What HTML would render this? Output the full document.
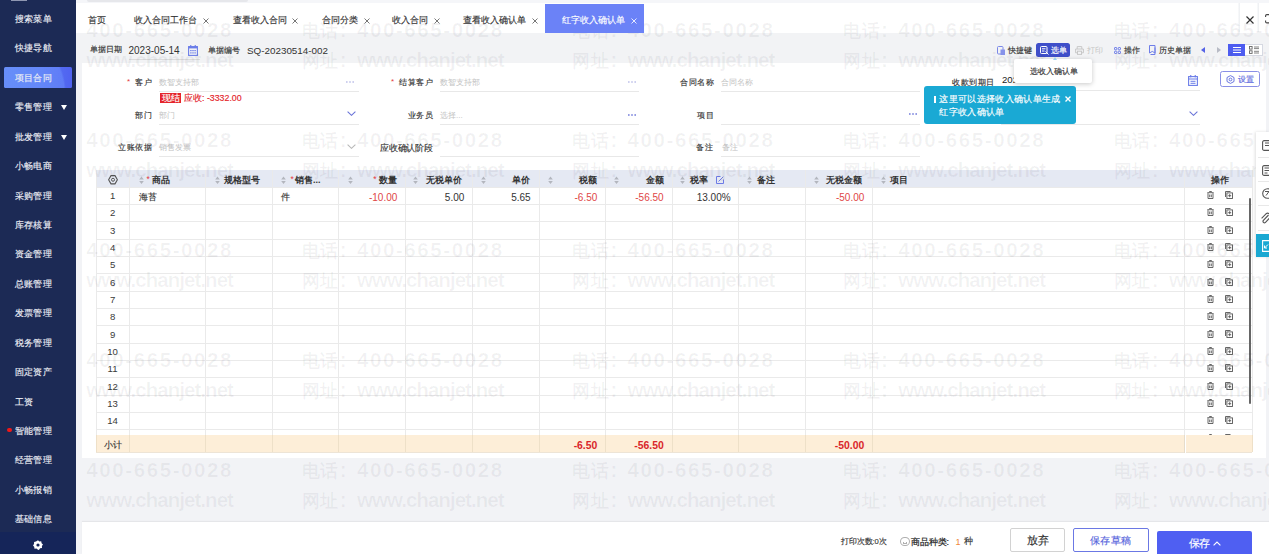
<!DOCTYPE html><html><head><meta charset="utf-8"><style>

*{margin:0;padding:0;box-sizing:border-box}
html,body{width:1269px;height:554px;overflow:hidden}
body{position:relative;background:#f2f3f6;font-family:"Liberation Sans", sans-serif;color:#333}
div,svg{position:absolute}
.t{white-space:nowrap}
.wm{color:rgba(40,40,60,0.06);font-weight:bold;font-size:20.5px;line-height:24px;white-space:nowrap;z-index:3;pointer-events:none}
.wm b{font-weight:bold;letter-spacing:1.6px}
.wm s{text-decoration:none;display:inline-block;width:36.5px;font-size:18px;text-align:justify;text-align-last:justify}
.wm i{font-style:normal;margin:0 10.4px 0 1.5px}
.wm u{text-decoration:none;letter-spacing:-0.95px}

</style></head><body>
<div style="left:76.00px;top:0.00px;width:1193.00px;height:33.00px;background:#fff;"></div>
<div style="left:76.00px;top:0.00px;width:1193.00px;height:3.00px;background:#f5f6f9;"></div>
<div style="left:87.00px;top:0.00px;width:161.00px;height:2.00px;background:#e6e7eb;border-radius:0 0 2px 2px"></div>
<div class="t" style="top:13.70px;font-size:9px;line-height:12.6px;color:#333;left:88.00px;-webkit-text-stroke:0.15px #333;width:17.60px;text-align:justify;text-align-last:justify;">首页</div>
<div class="t" style="top:13.70px;font-size:9px;line-height:12.6px;color:#333;left:134.00px;-webkit-text-stroke:0.15px #333;width:62.60px;text-align:justify;text-align-last:justify;">收入合同工作台</div>
<svg style="left:202.90px;top:17.80px;" width="6" height="6" viewBox="0 0 6 6"><path d="M0.5 0.5L5.5 5.5M5.5 0.5L0.5 5.5" stroke="#777" stroke-width="1.0"/></svg>
<div class="t" style="top:13.70px;font-size:9px;line-height:12.6px;color:#333;left:232.80px;-webkit-text-stroke:0.15px #333;width:53.60px;text-align:justify;text-align-last:justify;">查看收入合同</div>
<svg style="left:292.10px;top:17.80px;" width="6" height="6" viewBox="0 0 6 6"><path d="M0.5 0.5L5.5 5.5M5.5 0.5L0.5 5.5" stroke="#777" stroke-width="1.0"/></svg>
<div class="t" style="top:13.70px;font-size:9px;line-height:12.6px;color:#333;left:322.00px;-webkit-text-stroke:0.15px #333;width:35.60px;text-align:justify;text-align-last:justify;">合同分类</div>
<svg style="left:363.60px;top:17.80px;" width="6" height="6" viewBox="0 0 6 6"><path d="M0.5 0.5L5.5 5.5M5.5 0.5L0.5 5.5" stroke="#777" stroke-width="1.0"/></svg>
<div class="t" style="top:13.70px;font-size:9px;line-height:12.6px;color:#333;left:392.00px;-webkit-text-stroke:0.15px #333;width:35.60px;text-align:justify;text-align-last:justify;">收入合同</div>
<svg style="left:434.00px;top:17.80px;" width="6" height="6" viewBox="0 0 6 6"><path d="M0.5 0.5L5.5 5.5M5.5 0.5L0.5 5.5" stroke="#777" stroke-width="1.0"/></svg>
<div class="t" style="top:13.70px;font-size:9px;line-height:12.6px;color:#333;left:463.00px;-webkit-text-stroke:0.15px #333;width:62.60px;text-align:justify;text-align-last:justify;">查看收入确认单</div>
<svg style="left:532.00px;top:17.80px;" width="6" height="6" viewBox="0 0 6 6"><path d="M0.5 0.5L5.5 5.5M5.5 0.5L0.5 5.5" stroke="#777" stroke-width="1.0"/></svg>
<div style="left:545.00px;top:4.00px;width:98.70px;height:29.00px;background:#6b82f7;z-index:4"></div>
<div class="t" style="top:13.70px;font-size:9px;line-height:12.6px;color:#fff;left:562.00px;-webkit-text-stroke:0.15px #fff;z-index:4;width:62.60px;text-align:justify;text-align-last:justify;">红字收入确认单</div>
<svg style="left:631.00px;top:17.80px;z-index:4;" width="6" height="6" viewBox="0 0 6 6"><path d="M0.5 0.5L5.5 5.5M5.5 0.5L0.5 5.5" stroke="#e6e9ff" stroke-width="1.0"/></svg>
<div style="left:1237.50px;top:3.00px;width:2.50px;height:29.00px;background:linear-gradient(90deg,#fafbfc,#eceef1);"></div>
<div style="left:1257.00px;top:3.00px;width:2.00px;height:29.00px;background:linear-gradient(90deg,#fafbfc,#eceef1);"></div>
<svg style="left:1245.50px;top:15.50px;" width="8" height="8" viewBox="0 0 8 8"><path d="M0.5 0.5L7.5 7.5M7.5 0.5L0.5 7.5" stroke="#333" stroke-width="1.2"/></svg>
<svg style="left:1265px;top:14px" width="5" height="9.5" viewBox="0 0 5 9.5"><path d="M4.5 0.6H1.8A1.2 1.2 0 0 0 0.6 1.8V3M0.6 6.5V7.7A1.2 1.2 0 0 0 1.8 8.9H4.5" fill="none" stroke="#444" stroke-width="1.1"/></svg>
<div style="left:76.00px;top:33.00px;width:1193.00px;height:30.00px;background:#f2f3f5;"></div>
<div class="t" style="top:44.40px;font-size:8px;line-height:11.2px;color:#333;left:89.50px;-webkit-text-stroke:0.15px #333;width:31.60px;text-align:justify;text-align-last:justify;">单据日期</div>
<div class="t" style="top:44.20px;font-size:10px;line-height:14.0px;color:#333;left:128.50px;">2023-05-14</div>
<svg style="left:188px;top:44.5px" width="10" height="11" viewBox="0 0 10 11"><rect x="0.6" y="1.6" width="8.8" height="8.8" fill="none" stroke="#6b7de8" stroke-width="1.1"/><rect x="0.6" y="1.6" width="8.8" height="1.8" fill="#6b7de8"/><g fill="#6b7de8"><rect x="2.2" y="5" width="1.4" height="1.2"/><rect x="4.3" y="5" width="1.4" height="1.2"/><rect x="6.4" y="5" width="1.4" height="1.2"/><rect x="2.2" y="7.3" width="1.4" height="1.2"/><rect x="4.3" y="7.3" width="1.4" height="1.2"/><rect x="6.4" y="7.3" width="1.4" height="1.2"/></g><rect x="2.2" y="0" width="1.1" height="2.4" fill="#6b7de8"/><rect x="6.7" y="0" width="1.1" height="2.4" fill="#6b7de8"/></svg>
<div style="left:129.00px;top:59.00px;width:71.00px;height:1.00px;background:#dcdcdc;"></div>
<div class="t" style="top:44.90px;font-size:8px;line-height:11.2px;color:#333;left:208.00px;-webkit-text-stroke:0.15px #333;width:31.60px;text-align:justify;text-align-last:justify;">单据编号</div>
<div class="t" style="top:43.50px;font-size:9.85px;line-height:13.79px;color:#333;left:247.00px;">SQ-20230514-002</div>
<svg style="left:996.5px;top:45.5px" width="8" height="9" viewBox="0 0 8 9"><rect x="0.5" y="0.5" width="5.5" height="7.5" rx="1" fill="none" stroke="#7b88e8" stroke-width="1"/><rect x="3.5" y="3.5" width="4.5" height="5.5" fill="#8793ea"/></svg>
<div class="t" style="top:45.20px;font-size:8px;line-height:11.2px;color:#333;left:1007.60px;-webkit-text-stroke:0.15px #333;width:23.60px;text-align:justify;text-align-last:justify;">快捷键</div>
<div style="left:1036.00px;top:43.40px;width:34.40px;height:13.20px;background:#3f4fc9;border-radius:2.5px"></div>
<svg style="left:1039.5px;top:45.5px" width="9" height="9" viewBox="0 0 9 9"><rect x="0.5" y="0.5" width="6.5" height="7" rx="1" fill="none" stroke="#fff" stroke-width="1"/><path d="M2 2.8h3.5M2 5h2.5" stroke="#fff" stroke-width="1"/><path d="M5.5 5.5l3 3" stroke="#fff" stroke-width="1"/></svg>
<div class="t" style="top:45.20px;font-size:8px;line-height:11.2px;color:#fff;left:1050.50px;-webkit-text-stroke:0.15px #fff;width:15.60px;text-align:justify;text-align-last:justify;">选单</div>
<div style="left:1053px;top:56.6px;width:0;height:0;border-left:2.5px solid transparent;border-right:2.5px solid transparent;border-bottom:3px solid #9fd2ee;z-index:11"></div>
<svg style="left:1074.6px;top:45.5px" width="9" height="9" viewBox="0 0 9 9"><path d="M2.2 3V0.6h4.6V3M0.6 3h7.8v3.8H7M2 6.8H0.6V3" fill="none" stroke="#c8c8c8" stroke-width="1"/><rect x="2.5" y="5.2" width="4" height="3.2" fill="none" stroke="#c8c8c8" stroke-width="1"/></svg>
<div class="t" style="top:45.20px;font-size:8px;line-height:11.2px;color:#c4c4c4;left:1086.70px;width:15.60px;text-align:justify;text-align-last:justify;">打印</div>
<svg style="left:1114px;top:46.5px" width="7" height="7" viewBox="0 0 7 7"><g fill="none" stroke="#6f7ee8" stroke-width="1"><rect x="0.5" y="0.5" width="2.3" height="2.3" rx=".6"/><rect x="4.2" y="0.5" width="2.3" height="2.3" rx=".6"/><rect x="0.5" y="4.2" width="2.3" height="2.3" rx=".6"/><rect x="4.2" y="4.2" width="2.3" height="2.3" rx=".6"/></g></svg>
<div class="t" style="top:45.20px;font-size:8px;line-height:11.2px;color:#333;left:1124.00px;-webkit-text-stroke:0.15px #333;width:15.60px;text-align:justify;text-align-last:justify;">操作</div>
<svg style="left:1148.7px;top:45px" width="7" height="10" viewBox="0 0 7 10"><path d="M0.5 0.5h5.5v7.5l-2.75-1.6-2.75 1.6z" fill="none" stroke="#6f7ee8" stroke-width="1"/><path d="M6 2.5v7H1.5" fill="none" stroke="#6f7ee8" stroke-width="1"/></svg>
<div class="t" style="top:45.20px;font-size:8px;line-height:11.2px;color:#333;left:1158.90px;-webkit-text-stroke:0.15px #333;width:31.60px;text-align:justify;text-align-last:justify;">历史单据</div>
<div style="left:1201px;top:46.8px;width:0;height:0;border-top:3.5px solid transparent;border-bottom:3.5px solid transparent;border-right:4.5px solid #5563e6"></div>
<div style="left:1217px;top:46.8px;width:0;height:0;border-top:3.5px solid transparent;border-bottom:3.5px solid transparent;border-left:4.5px solid #b8bbc5"></div>
<div style="left:1227.50px;top:43.80px;width:35.00px;height:12.50px;background:#fff;border:1px solid #d6d9e2"></div>
<div style="left:1227.50px;top:43.80px;width:17.50px;height:12.50px;background:#4d5cf0;"></div>
<svg style="left:1231.5px;top:46.3px" width="10" height="8" viewBox="0 0 10 8"><path d="M1 1.5h8M1 4h8M1 6.5h8" stroke="#fff" stroke-width="1"/></svg>
<svg style="left:1248.5px;top:46px" width="11" height="8" viewBox="0 0 11 8"><g fill="none" stroke="#666" stroke-width=".9"><rect x="0.5" y="0.5" width="2.6" height="2.6"/><rect x="0.5" y="4.8" width="2.6" height="2.6"/></g><path d="M5 1h5M5 2.6h5M5 5.3h5M5 7h5" stroke="#666" stroke-width=".8"/></svg>
<div style="left:82.00px;top:63.00px;width:1184.00px;height:395.00px;background:#fff;"></div>
<div class="t" style="top:76.80px;font-size:8px;line-height:11.2px;color:#333;letter-spacing:0.5px;left:135.00px;-webkit-text-stroke:0.15px #333;width:16.60px;text-align:justify;text-align-last:justify;">客户</div>
<div class="t" style="top:76.30px;font-size:8px;line-height:11.2px;color:#e4393c;left:127.00px;">*</div>
<div class="t" style="top:76.80px;font-size:8px;line-height:11.2px;color:#c2c2c2;left:158.50px;width:39.60px;text-align:justify;text-align-last:justify;">数智支持部</div>
<svg style="left:346.00px;top:81.40px" width="8" height="2" viewBox="0 0 8 2"><g fill="#b9bde8"><rect x="0" y="0.3" width="1.6" height="1.4"/><rect x="3.2" y="0.3" width="1.6" height="1.4"/><rect x="6.4" y="0.3" width="1.6" height="1.4"/></g></svg>
<div style="left:158.50px;top:91.00px;width:200.50px;height:1.00px;background:#e8e8e8;"></div>
<div style="left:160.00px;top:92.70px;width:21.00px;height:10.30px;background:#e5242b;"></div>
<div class="t" style="top:91.60px;font-size:9px;line-height:12.6px;color:#fff;left:161.50px;-webkit-text-stroke:0.15px #fff;width:17.60px;text-align:justify;text-align-last:justify;">现结</div>
<div class="t" style="top:92.24px;font-size:8.8px;line-height:12.32px;color:#e5242b;left:184.00px;-webkit-text-stroke:0.15px #e5242b;width:57.23px;text-align:justify;text-align-last:justify;">应收: -3332.00</div>
<div class="t" style="top:109.60px;font-size:8px;line-height:11.2px;color:#333;letter-spacing:0.5px;left:135.00px;-webkit-text-stroke:0.15px #333;width:16.60px;text-align:justify;text-align-last:justify;">部门</div>
<div class="t" style="top:109.60px;font-size:8px;line-height:11.2px;color:#c2c2c2;left:158.50px;width:15.60px;text-align:justify;text-align-last:justify;">部门</div>
<svg style="left:346.70px;top:110.50px" width="9" height="5" viewBox="0 0 9 5"><path d="M0.6 0.6L4.5 4.3L8.4 0.6" fill="none" stroke="#6a74d8" stroke-width="1.1"/></svg>
<div style="left:158.50px;top:124.00px;width:200.50px;height:1.00px;background:#e8e8e8;"></div>
<div class="t" style="top:142.40px;font-size:8px;line-height:11.2px;color:#333;letter-spacing:0.5px;left:118.00px;-webkit-text-stroke:0.15px #333;width:33.60px;text-align:justify;text-align-last:justify;">立账依据</div>
<div class="t" style="top:142.40px;font-size:8px;line-height:11.2px;color:#c2c2c2;left:158.50px;width:31.60px;text-align:justify;text-align-last:justify;">销售发票</div>
<svg style="left:347.00px;top:143.50px" width="9" height="5" viewBox="0 0 9 5"><path d="M0.6 0.6L4.5 4.3L8.4 0.6" fill="none" stroke="#b8b8b8" stroke-width="1.1"/></svg>
<div style="left:158.50px;top:156.00px;width:200.50px;height:1.00px;background:#e8e8e8;"></div>
<div class="t" style="top:76.80px;font-size:8px;line-height:11.2px;color:#333;letter-spacing:0.5px;left:399.00px;-webkit-text-stroke:0.15px #333;width:33.60px;text-align:justify;text-align-last:justify;">结算客户</div>
<div class="t" style="top:76.30px;font-size:8px;line-height:11.2px;color:#e4393c;left:391.00px;">*</div>
<div class="t" style="top:76.80px;font-size:8px;line-height:11.2px;color:#c2c2c2;left:440.00px;width:39.60px;text-align:justify;text-align-last:justify;">数智支持部</div>
<svg style="left:627.50px;top:81.40px" width="8" height="2" viewBox="0 0 8 2"><g fill="#b9bde8"><rect x="0" y="0.3" width="1.6" height="1.4"/><rect x="3.2" y="0.3" width="1.6" height="1.4"/><rect x="6.4" y="0.3" width="1.6" height="1.4"/></g></svg>
<div style="left:440.00px;top:91.00px;width:199.00px;height:1.00px;background:#e8e8e8;"></div>
<div class="t" style="top:109.60px;font-size:8px;line-height:11.2px;color:#333;letter-spacing:0.5px;left:407.50px;-webkit-text-stroke:0.15px #333;width:25.10px;text-align:justify;text-align-last:justify;">业务员</div>
<div class="t" style="top:109.60px;font-size:8px;line-height:11.2px;color:#c2c2c2;left:440.00px;width:22.27px;text-align:justify;text-align-last:justify;">选择...</div>
<svg style="left:627.50px;top:114.20px" width="8" height="2" viewBox="0 0 8 2"><g fill="#6a74d8"><rect x="0" y="0.3" width="1.6" height="1.4"/><rect x="3.2" y="0.3" width="1.6" height="1.4"/><rect x="6.4" y="0.3" width="1.6" height="1.4"/></g></svg>
<div style="left:440.00px;top:124.00px;width:199.00px;height:1.00px;background:#e8e8e8;"></div>
<div class="t" style="top:141.70px;font-size:9px;line-height:12.6px;color:#333;letter-spacing:-0.2px;left:380.00px;-webkit-text-stroke:0.15px #333;width:52.40px;text-align:justify;text-align-last:justify;">应收确认阶段</div>
<div style="left:440.00px;top:156.00px;width:199.00px;height:1.00px;background:#e8e8e8;"></div>
<div class="t" style="top:76.80px;font-size:8px;line-height:11.2px;color:#333;letter-spacing:0.5px;left:680.00px;-webkit-text-stroke:0.15px #333;width:33.60px;text-align:justify;text-align-last:justify;">合同名称</div>
<div class="t" style="top:76.80px;font-size:8px;line-height:11.2px;color:#c2c2c2;left:721.00px;width:31.60px;text-align:justify;text-align-last:justify;">合同名称</div>
<div style="left:721.00px;top:91.00px;width:199.00px;height:1.00px;background:#e8e8e8;"></div>
<div class="t" style="top:109.60px;font-size:8px;line-height:11.2px;color:#333;letter-spacing:0.5px;left:697.00px;-webkit-text-stroke:0.15px #333;width:16.60px;text-align:justify;text-align-last:justify;">项目</div>
<svg style="left:908.50px;top:112.60px" width="8" height="2" viewBox="0 0 8 2"><g fill="#6a74d8"><rect x="0" y="0.3" width="1.6" height="1.4"/><rect x="3.2" y="0.3" width="1.6" height="1.4"/><rect x="6.4" y="0.3" width="1.6" height="1.4"/></g></svg>
<div style="left:721.00px;top:124.00px;width:199.00px;height:1.00px;background:#e8e8e8;"></div>
<div class="t" style="top:142.40px;font-size:8px;line-height:11.2px;color:#333;letter-spacing:0.5px;left:696.00px;-webkit-text-stroke:0.15px #333;width:16.60px;text-align:justify;text-align-last:justify;">备注</div>
<div class="t" style="top:142.40px;font-size:8px;line-height:11.2px;color:#c2c2c2;left:721.50px;width:15.60px;text-align:justify;text-align-last:justify;">备注</div>
<div style="left:721.00px;top:156.00px;width:199.00px;height:1.00px;background:#e8e8e8;"></div>
<div class="t" style="top:76.80px;font-size:8px;line-height:11.2px;color:#333;letter-spacing:0.5px;left:952.00px;-webkit-text-stroke:0.15px #333;width:42.10px;text-align:justify;text-align-last:justify;">收款到期日</div>
<div class="t" style="top:73.28px;font-size:9.6px;line-height:13.44px;color:#222;left:1002.00px;">2023-06-13</div>
<svg style="left:1188px;top:74.5px" width="10" height="11" viewBox="0 0 10 11"><rect x="0.6" y="1.6" width="8.8" height="8.8" fill="none" stroke="#6b7de8" stroke-width="1.1"/><path d="M0.6 4h8.8M2.5 6.3h5M2.5 8.3h5" stroke="#6b7de8" stroke-width="1"/><rect x="2.2" y="0" width="1.1" height="2.4" fill="#6b7de8"/><rect x="6.7" y="0" width="1.1" height="2.4" fill="#6b7de8"/></svg>
<div style="left:1001.00px;top:90.00px;width:199.30px;height:1.00px;background:#e8e8e8;"></div>
<svg style="left:1188.50px;top:110.50px" width="9" height="5" viewBox="0 0 9 5"><path d="M0.6 0.6L4.5 4.3L8.4 0.6" fill="none" stroke="#6a74d8" stroke-width="1.1"/></svg>
<div style="left:1001.00px;top:124.00px;width:199.30px;height:1.00px;background:#e8e8e8;"></div>
<div style="left:1219.80px;top:70.50px;width:39.80px;height:16.00px;background:#fff;border:1px solid #8a90e6;border-radius:2.5px"></div>
<svg style="left:1225.5px;top:75.3px" width="9" height="9" viewBox="0 0 9 9"><path d="M4.5 0.6L8 2.5V6.5L4.5 8.4L1 6.5V2.5Z" fill="none" stroke="#6a76e0" stroke-width="1"/><circle cx="4.5" cy="4.5" r="1.4" fill="none" stroke="#6a76e0" stroke-width="1"/></svg>
<div class="t" style="top:74.30px;font-size:8px;line-height:11.2px;color:#5b68de;letter-spacing:0.5px;left:1237.50px;-webkit-text-stroke:0.15px #5b68de;width:16.60px;text-align:justify;text-align-last:justify;">设置</div>
<div style="left:96.00px;top:169.90px;width:1156.40px;height:16.90px;background:#e5e9f3;"></div>
<div style="left:96.00px;top:187.00px;width:1156.40px;height:1.00px;background:#eaeaea;"></div>
<div style="left:96.00px;top:204.00px;width:1156.40px;height:1.00px;background:#eaeaea;"></div>
<div style="left:96.00px;top:221.00px;width:1156.40px;height:1.00px;background:#eaeaea;"></div>
<div style="left:96.00px;top:239.00px;width:1156.40px;height:1.00px;background:#eaeaea;"></div>
<div style="left:96.00px;top:256.00px;width:1156.40px;height:1.00px;background:#eaeaea;"></div>
<div style="left:96.00px;top:273.00px;width:1156.40px;height:1.00px;background:#eaeaea;"></div>
<div style="left:96.00px;top:291.00px;width:1156.40px;height:1.00px;background:#eaeaea;"></div>
<div style="left:96.00px;top:308.00px;width:1156.40px;height:1.00px;background:#eaeaea;"></div>
<div style="left:96.00px;top:325.00px;width:1156.40px;height:1.00px;background:#eaeaea;"></div>
<div style="left:96.00px;top:343.00px;width:1156.40px;height:1.00px;background:#eaeaea;"></div>
<div style="left:96.00px;top:360.00px;width:1156.40px;height:1.00px;background:#eaeaea;"></div>
<div style="left:96.00px;top:377.00px;width:1156.40px;height:1.00px;background:#eaeaea;"></div>
<div style="left:96.00px;top:395.00px;width:1156.40px;height:1.00px;background:#eaeaea;"></div>
<div style="left:96.00px;top:412.00px;width:1156.40px;height:1.00px;background:#eaeaea;"></div>
<div style="left:96.00px;top:429.00px;width:1156.40px;height:1.00px;background:#eaeaea;"></div>
<div style="left:96.00px;top:170.00px;width:1.00px;height:282.00px;background:#eaeaea;"></div>
<div style="left:129.00px;top:170.00px;width:1.00px;height:282.00px;background:#eaeaea;"></div>
<div style="left:205.00px;top:170.00px;width:1.00px;height:282.00px;background:#eaeaea;"></div>
<div style="left:272.00px;top:170.00px;width:1.00px;height:282.00px;background:#eaeaea;"></div>
<div style="left:338.00px;top:170.00px;width:1.00px;height:282.00px;background:#eaeaea;"></div>
<div style="left:405.00px;top:170.00px;width:1.00px;height:282.00px;background:#eaeaea;"></div>
<div style="left:472.00px;top:170.00px;width:1.00px;height:282.00px;background:#eaeaea;"></div>
<div style="left:539.00px;top:170.00px;width:1.00px;height:282.00px;background:#eaeaea;"></div>
<div style="left:605.00px;top:170.00px;width:1.00px;height:282.00px;background:#eaeaea;"></div>
<div style="left:672.00px;top:170.00px;width:1.00px;height:282.00px;background:#eaeaea;"></div>
<div style="left:738.00px;top:170.00px;width:1.00px;height:282.00px;background:#eaeaea;"></div>
<div style="left:805.00px;top:170.00px;width:1.00px;height:282.00px;background:#eaeaea;"></div>
<div style="left:872.00px;top:170.00px;width:1.00px;height:282.00px;background:#eaeaea;"></div>
<div style="left:1184.00px;top:170.00px;width:1.00px;height:282.00px;background:#eaeaea;"></div>
<div style="left:1252.00px;top:170.00px;width:1.00px;height:282.00px;background:#eaeaea;"></div>
<svg style="left:108px;top:175px" width="10" height="9.5" viewBox="0 0 10 9.5"><path d="M3 0.6h4l2.4 4.15L7 8.9H3L0.6 4.75Z" fill="none" stroke="#555" stroke-width="1.1"/><circle cx="5" cy="4.75" r="1.5" fill="none" stroke="#555" stroke-width="1"/></svg>
<svg style="left:138.60px;top:175.8px" width="5" height="8.5" viewBox="0 0 5 8.5"><path d="M0.2 3.4L2.5 0.5L4.8 3.4Z M0.2 5.1L2.5 8L4.8 5.1Z" fill="#b3b6be"/></svg>
<div class="t" style="top:174.45px;font-size:8.5px;line-height:11.9px;color:#e4393c;left:146.60px;">*</div>
<div class="t" style="top:173.70px;font-size:9px;line-height:12.6px;color:#333;left:152.00px;font-weight:bold;width:17.60px;text-align:justify;text-align-last:justify;">商品</div>
<svg style="left:215.00px;top:175.8px" width="5" height="8.5" viewBox="0 0 5 8.5"><path d="M0.2 3.4L2.5 0.5L4.8 3.4Z M0.2 5.1L2.5 8L4.8 5.1Z" fill="#b3b6be"/></svg>
<div class="t" style="top:173.70px;font-size:9px;line-height:12.6px;color:#333;left:223.60px;font-weight:bold;width:35.60px;text-align:justify;text-align-last:justify;">规格型号</div>
<svg style="left:281.00px;top:175.8px" width="5" height="8.5" viewBox="0 0 5 8.5"><path d="M0.2 3.4L2.5 0.5L4.8 3.4Z M0.2 5.1L2.5 8L4.8 5.1Z" fill="#b3b6be"/></svg>
<div class="t" style="top:174.45px;font-size:8.5px;line-height:11.9px;color:#e4393c;left:290.50px;">*</div>
<div class="t" style="top:173.70px;font-size:9px;line-height:12.6px;color:#333;left:295.00px;font-weight:bold;width:25.10px;text-align:justify;text-align-last:justify;">销售...</div>
<svg style="left:347.50px;top:175.8px" width="5" height="8.5" viewBox="0 0 5 8.5"><path d="M0.2 3.4L2.5 0.5L4.8 3.4Z M0.2 5.1L2.5 8L4.8 5.1Z" fill="#b3b6be"/></svg>
<div class="t" style="top:174.45px;font-size:8.5px;line-height:11.9px;color:#e4393c;left:373.20px;">*</div>
<div class="t" style="top:173.70px;font-size:9px;line-height:12.6px;color:#333;right:872.20px;font-weight:bold;width:17.60px;text-align:justify;text-align-last:justify;">数量</div>
<svg style="left:413.00px;top:175.8px" width="5" height="8.5" viewBox="0 0 5 8.5"><path d="M0.2 3.4L2.5 0.5L4.8 3.4Z M0.2 5.1L2.5 8L4.8 5.1Z" fill="#b3b6be"/></svg>
<div class="t" style="top:173.70px;font-size:9px;line-height:12.6px;color:#333;left:426.00px;font-weight:bold;width:35.60px;text-align:justify;text-align-last:justify;">无税单价</div>
<svg style="left:480.50px;top:175.8px" width="5" height="8.5" viewBox="0 0 5 8.5"><path d="M0.2 3.4L2.5 0.5L4.8 3.4Z M0.2 5.1L2.5 8L4.8 5.1Z" fill="#b3b6be"/></svg>
<div class="t" style="top:173.70px;font-size:9px;line-height:12.6px;color:#333;right:739.00px;font-weight:bold;width:17.60px;text-align:justify;text-align-last:justify;">单价</div>
<svg style="left:547.50px;top:175.8px" width="5" height="8.5" viewBox="0 0 5 8.5"><path d="M0.2 3.4L2.5 0.5L4.8 3.4Z M0.2 5.1L2.5 8L4.8 5.1Z" fill="#b3b6be"/></svg>
<div class="t" style="top:173.70px;font-size:9px;line-height:12.6px;color:#333;right:672.30px;font-weight:bold;width:17.60px;text-align:justify;text-align-last:justify;">税额</div>
<svg style="left:614.00px;top:175.8px" width="5" height="8.5" viewBox="0 0 5 8.5"><path d="M0.2 3.4L2.5 0.5L4.8 3.4Z M0.2 5.1L2.5 8L4.8 5.1Z" fill="#b3b6be"/></svg>
<div class="t" style="top:173.70px;font-size:9px;line-height:12.6px;color:#333;right:605.70px;font-weight:bold;width:17.60px;text-align:justify;text-align-last:justify;">金额</div>
<svg style="left:679.50px;top:175.8px" width="5" height="8.5" viewBox="0 0 5 8.5"><path d="M0.2 3.4L2.5 0.5L4.8 3.4Z M0.2 5.1L2.5 8L4.8 5.1Z" fill="#b3b6be"/></svg>
<div class="t" style="top:173.70px;font-size:9px;line-height:12.6px;color:#333;left:689.80px;font-weight:bold;width:17.60px;text-align:justify;text-align-last:justify;">税率</div>
<svg style="left:715.5px;top:175.5px" width="8" height="8" viewBox="0 0 8 8"><path d="M7.5 3.5V7.5H0.5V0.5H4.5" fill="none" stroke="#6d7be6" stroke-width="1"/><path d="M2.5 5.5L7.3 0.7" stroke="#6d7be6" stroke-width="1"/></svg>
<svg style="left:747.00px;top:175.8px" width="5" height="8.5" viewBox="0 0 5 8.5"><path d="M0.2 3.4L2.5 0.5L4.8 3.4Z M0.2 5.1L2.5 8L4.8 5.1Z" fill="#b3b6be"/></svg>
<div class="t" style="top:173.70px;font-size:9px;line-height:12.6px;color:#333;left:756.50px;font-weight:bold;width:17.60px;text-align:justify;text-align-last:justify;">备注</div>
<svg style="left:813.50px;top:175.8px" width="5" height="8.5" viewBox="0 0 5 8.5"><path d="M0.2 3.4L2.5 0.5L4.8 3.4Z M0.2 5.1L2.5 8L4.8 5.1Z" fill="#b3b6be"/></svg>
<div class="t" style="top:173.70px;font-size:9px;line-height:12.6px;color:#333;left:826.00px;font-weight:bold;width:35.60px;text-align:justify;text-align-last:justify;">无税金额</div>
<svg style="left:880.50px;top:175.8px" width="5" height="8.5" viewBox="0 0 5 8.5"><path d="M0.2 3.4L2.5 0.5L4.8 3.4Z M0.2 5.1L2.5 8L4.8 5.1Z" fill="#b3b6be"/></svg>
<div class="t" style="top:173.70px;font-size:9px;line-height:12.6px;color:#333;left:889.80px;font-weight:bold;width:17.60px;text-align:justify;text-align-last:justify;">项目</div>
<div class="t" style="top:173.70px;font-size:9px;line-height:12.6px;color:#333;left:1211.00px;font-weight:bold;width:17.60px;text-align:justify;text-align-last:justify;">操作</div>
<div class="t" style="top:189.15px;font-size:9.6px;line-height:13.44px;color:#3a3a3a;left:96.00px;width:33.2px;text-align:center;">1</div>
<svg style="left:1206.80px;top:190.97px" width="7" height="8" viewBox="0 0 7 8"><path d="M2.5 1.2V0.5h2v0.7M0.3 1.7h6.4M1 2.2v5.3h5V2.2M2.7 3.5v2.7M4.3 3.5v2.7" fill="none" stroke="#555" stroke-width="0.9"/></svg>
<svg style="left:1225.00px;top:190.97px" width="8" height="8" viewBox="0 0 8 8"><path d="M0.5 6V0.5h5" fill="none" stroke="#555" stroke-width="0.9"/><rect x="1.9" y="1.9" width="5.6" height="5.6" fill="none" stroke="#555" stroke-width="0.9"/><path d="M4.7 3.2v3M3.2 4.7h3" stroke="#555" stroke-width="0.9"/></svg>
<div class="t" style="top:206.47px;font-size:9.6px;line-height:13.44px;color:#3a3a3a;left:96.00px;width:33.2px;text-align:center;">2</div>
<svg style="left:1206.80px;top:208.29px" width="7" height="8" viewBox="0 0 7 8"><path d="M2.5 1.2V0.5h2v0.7M0.3 1.7h6.4M1 2.2v5.3h5V2.2M2.7 3.5v2.7M4.3 3.5v2.7" fill="none" stroke="#555" stroke-width="0.9"/></svg>
<svg style="left:1225.00px;top:208.29px" width="8" height="8" viewBox="0 0 8 8"><path d="M0.5 6V0.5h5" fill="none" stroke="#555" stroke-width="0.9"/><rect x="1.9" y="1.9" width="5.6" height="5.6" fill="none" stroke="#555" stroke-width="0.9"/><path d="M4.7 3.2v3M3.2 4.7h3" stroke="#555" stroke-width="0.9"/></svg>
<div class="t" style="top:223.81px;font-size:9.6px;line-height:13.44px;color:#3a3a3a;left:96.00px;width:33.2px;text-align:center;">3</div>
<svg style="left:1206.80px;top:225.62px" width="7" height="8" viewBox="0 0 7 8"><path d="M2.5 1.2V0.5h2v0.7M0.3 1.7h6.4M1 2.2v5.3h5V2.2M2.7 3.5v2.7M4.3 3.5v2.7" fill="none" stroke="#555" stroke-width="0.9"/></svg>
<svg style="left:1225.00px;top:225.62px" width="8" height="8" viewBox="0 0 8 8"><path d="M0.5 6V0.5h5" fill="none" stroke="#555" stroke-width="0.9"/><rect x="1.9" y="1.9" width="5.6" height="5.6" fill="none" stroke="#555" stroke-width="0.9"/><path d="M4.7 3.2v3M3.2 4.7h3" stroke="#555" stroke-width="0.9"/></svg>
<div class="t" style="top:241.14px;font-size:9.6px;line-height:13.44px;color:#3a3a3a;left:96.00px;width:33.2px;text-align:center;">4</div>
<svg style="left:1206.80px;top:242.96px" width="7" height="8" viewBox="0 0 7 8"><path d="M2.5 1.2V0.5h2v0.7M0.3 1.7h6.4M1 2.2v5.3h5V2.2M2.7 3.5v2.7M4.3 3.5v2.7" fill="none" stroke="#555" stroke-width="0.9"/></svg>
<svg style="left:1225.00px;top:242.96px" width="8" height="8" viewBox="0 0 8 8"><path d="M0.5 6V0.5h5" fill="none" stroke="#555" stroke-width="0.9"/><rect x="1.9" y="1.9" width="5.6" height="5.6" fill="none" stroke="#555" stroke-width="0.9"/><path d="M4.7 3.2v3M3.2 4.7h3" stroke="#555" stroke-width="0.9"/></svg>
<div class="t" style="top:258.46px;font-size:9.6px;line-height:13.44px;color:#3a3a3a;left:96.00px;width:33.2px;text-align:center;">5</div>
<svg style="left:1206.80px;top:260.29px" width="7" height="8" viewBox="0 0 7 8"><path d="M2.5 1.2V0.5h2v0.7M0.3 1.7h6.4M1 2.2v5.3h5V2.2M2.7 3.5v2.7M4.3 3.5v2.7" fill="none" stroke="#555" stroke-width="0.9"/></svg>
<svg style="left:1225.00px;top:260.29px" width="8" height="8" viewBox="0 0 8 8"><path d="M0.5 6V0.5h5" fill="none" stroke="#555" stroke-width="0.9"/><rect x="1.9" y="1.9" width="5.6" height="5.6" fill="none" stroke="#555" stroke-width="0.9"/><path d="M4.7 3.2v3M3.2 4.7h3" stroke="#555" stroke-width="0.9"/></svg>
<div class="t" style="top:275.79px;font-size:9.6px;line-height:13.44px;color:#3a3a3a;left:96.00px;width:33.2px;text-align:center;">6</div>
<svg style="left:1206.80px;top:277.62px" width="7" height="8" viewBox="0 0 7 8"><path d="M2.5 1.2V0.5h2v0.7M0.3 1.7h6.4M1 2.2v5.3h5V2.2M2.7 3.5v2.7M4.3 3.5v2.7" fill="none" stroke="#555" stroke-width="0.9"/></svg>
<svg style="left:1225.00px;top:277.62px" width="8" height="8" viewBox="0 0 8 8"><path d="M0.5 6V0.5h5" fill="none" stroke="#555" stroke-width="0.9"/><rect x="1.9" y="1.9" width="5.6" height="5.6" fill="none" stroke="#555" stroke-width="0.9"/><path d="M4.7 3.2v3M3.2 4.7h3" stroke="#555" stroke-width="0.9"/></svg>
<div class="t" style="top:293.12px;font-size:9.6px;line-height:13.44px;color:#3a3a3a;left:96.00px;width:33.2px;text-align:center;">7</div>
<svg style="left:1206.80px;top:294.94px" width="7" height="8" viewBox="0 0 7 8"><path d="M2.5 1.2V0.5h2v0.7M0.3 1.7h6.4M1 2.2v5.3h5V2.2M2.7 3.5v2.7M4.3 3.5v2.7" fill="none" stroke="#555" stroke-width="0.9"/></svg>
<svg style="left:1225.00px;top:294.94px" width="8" height="8" viewBox="0 0 8 8"><path d="M0.5 6V0.5h5" fill="none" stroke="#555" stroke-width="0.9"/><rect x="1.9" y="1.9" width="5.6" height="5.6" fill="none" stroke="#555" stroke-width="0.9"/><path d="M4.7 3.2v3M3.2 4.7h3" stroke="#555" stroke-width="0.9"/></svg>
<div class="t" style="top:310.45px;font-size:9.6px;line-height:13.44px;color:#3a3a3a;left:96.00px;width:33.2px;text-align:center;">8</div>
<svg style="left:1206.80px;top:312.28px" width="7" height="8" viewBox="0 0 7 8"><path d="M2.5 1.2V0.5h2v0.7M0.3 1.7h6.4M1 2.2v5.3h5V2.2M2.7 3.5v2.7M4.3 3.5v2.7" fill="none" stroke="#555" stroke-width="0.9"/></svg>
<svg style="left:1225.00px;top:312.28px" width="8" height="8" viewBox="0 0 8 8"><path d="M0.5 6V0.5h5" fill="none" stroke="#555" stroke-width="0.9"/><rect x="1.9" y="1.9" width="5.6" height="5.6" fill="none" stroke="#555" stroke-width="0.9"/><path d="M4.7 3.2v3M3.2 4.7h3" stroke="#555" stroke-width="0.9"/></svg>
<div class="t" style="top:327.78px;font-size:9.6px;line-height:13.44px;color:#3a3a3a;left:96.00px;width:33.2px;text-align:center;">9</div>
<svg style="left:1206.80px;top:329.61px" width="7" height="8" viewBox="0 0 7 8"><path d="M2.5 1.2V0.5h2v0.7M0.3 1.7h6.4M1 2.2v5.3h5V2.2M2.7 3.5v2.7M4.3 3.5v2.7" fill="none" stroke="#555" stroke-width="0.9"/></svg>
<svg style="left:1225.00px;top:329.61px" width="8" height="8" viewBox="0 0 8 8"><path d="M0.5 6V0.5h5" fill="none" stroke="#555" stroke-width="0.9"/><rect x="1.9" y="1.9" width="5.6" height="5.6" fill="none" stroke="#555" stroke-width="0.9"/><path d="M4.7 3.2v3M3.2 4.7h3" stroke="#555" stroke-width="0.9"/></svg>
<div class="t" style="top:345.11px;font-size:9.6px;line-height:13.44px;color:#3a3a3a;left:96.00px;width:33.2px;text-align:center;">10</div>
<svg style="left:1206.80px;top:346.94px" width="7" height="8" viewBox="0 0 7 8"><path d="M2.5 1.2V0.5h2v0.7M0.3 1.7h6.4M1 2.2v5.3h5V2.2M2.7 3.5v2.7M4.3 3.5v2.7" fill="none" stroke="#555" stroke-width="0.9"/></svg>
<svg style="left:1225.00px;top:346.94px" width="8" height="8" viewBox="0 0 8 8"><path d="M0.5 6V0.5h5" fill="none" stroke="#555" stroke-width="0.9"/><rect x="1.9" y="1.9" width="5.6" height="5.6" fill="none" stroke="#555" stroke-width="0.9"/><path d="M4.7 3.2v3M3.2 4.7h3" stroke="#555" stroke-width="0.9"/></svg>
<div class="t" style="top:362.44px;font-size:9.6px;line-height:13.44px;color:#3a3a3a;left:96.00px;width:33.2px;text-align:center;">11</div>
<svg style="left:1206.80px;top:364.27px" width="7" height="8" viewBox="0 0 7 8"><path d="M2.5 1.2V0.5h2v0.7M0.3 1.7h6.4M1 2.2v5.3h5V2.2M2.7 3.5v2.7M4.3 3.5v2.7" fill="none" stroke="#555" stroke-width="0.9"/></svg>
<svg style="left:1225.00px;top:364.27px" width="8" height="8" viewBox="0 0 8 8"><path d="M0.5 6V0.5h5" fill="none" stroke="#555" stroke-width="0.9"/><rect x="1.9" y="1.9" width="5.6" height="5.6" fill="none" stroke="#555" stroke-width="0.9"/><path d="M4.7 3.2v3M3.2 4.7h3" stroke="#555" stroke-width="0.9"/></svg>
<div class="t" style="top:379.77px;font-size:9.6px;line-height:13.44px;color:#3a3a3a;left:96.00px;width:33.2px;text-align:center;">12</div>
<svg style="left:1206.80px;top:381.60px" width="7" height="8" viewBox="0 0 7 8"><path d="M2.5 1.2V0.5h2v0.7M0.3 1.7h6.4M1 2.2v5.3h5V2.2M2.7 3.5v2.7M4.3 3.5v2.7" fill="none" stroke="#555" stroke-width="0.9"/></svg>
<svg style="left:1225.00px;top:381.60px" width="8" height="8" viewBox="0 0 8 8"><path d="M0.5 6V0.5h5" fill="none" stroke="#555" stroke-width="0.9"/><rect x="1.9" y="1.9" width="5.6" height="5.6" fill="none" stroke="#555" stroke-width="0.9"/><path d="M4.7 3.2v3M3.2 4.7h3" stroke="#555" stroke-width="0.9"/></svg>
<div class="t" style="top:397.10px;font-size:9.6px;line-height:13.44px;color:#3a3a3a;left:96.00px;width:33.2px;text-align:center;">13</div>
<svg style="left:1206.80px;top:398.93px" width="7" height="8" viewBox="0 0 7 8"><path d="M2.5 1.2V0.5h2v0.7M0.3 1.7h6.4M1 2.2v5.3h5V2.2M2.7 3.5v2.7M4.3 3.5v2.7" fill="none" stroke="#555" stroke-width="0.9"/></svg>
<svg style="left:1225.00px;top:398.93px" width="8" height="8" viewBox="0 0 8 8"><path d="M0.5 6V0.5h5" fill="none" stroke="#555" stroke-width="0.9"/><rect x="1.9" y="1.9" width="5.6" height="5.6" fill="none" stroke="#555" stroke-width="0.9"/><path d="M4.7 3.2v3M3.2 4.7h3" stroke="#555" stroke-width="0.9"/></svg>
<div class="t" style="top:414.43px;font-size:9.6px;line-height:13.44px;color:#3a3a3a;left:96.00px;width:33.2px;text-align:center;">14</div>
<svg style="left:1206.80px;top:416.25px" width="7" height="8" viewBox="0 0 7 8"><path d="M2.5 1.2V0.5h2v0.7M0.3 1.7h6.4M1 2.2v5.3h5V2.2M2.7 3.5v2.7M4.3 3.5v2.7" fill="none" stroke="#555" stroke-width="0.9"/></svg>
<svg style="left:1225.00px;top:416.25px" width="8" height="8" viewBox="0 0 8 8"><path d="M0.5 6V0.5h5" fill="none" stroke="#555" stroke-width="0.9"/><rect x="1.9" y="1.9" width="5.6" height="5.6" fill="none" stroke="#555" stroke-width="0.9"/><path d="M4.7 3.2v3M3.2 4.7h3" stroke="#555" stroke-width="0.9"/></svg>
<svg style="left:1206.80px;top:433.58px" width="7" height="8" viewBox="0 0 7 8"><path d="M2.5 1.2V0.5h2v0.7M0.3 1.7h6.4M1 2.2v5.3h5V2.2M2.7 3.5v2.7M4.3 3.5v2.7" fill="none" stroke="#555" stroke-width="0.9"/></svg>
<svg style="left:1225.00px;top:433.58px" width="8" height="8" viewBox="0 0 8 8"><path d="M0.5 6V0.5h5" fill="none" stroke="#555" stroke-width="0.9"/><rect x="1.9" y="1.9" width="5.6" height="5.6" fill="none" stroke="#555" stroke-width="0.9"/><path d="M4.7 3.2v3M3.2 4.7h3" stroke="#555" stroke-width="0.9"/></svg>
<div class="t" style="top:190.66px;font-size:9px;line-height:12.6px;color:#333;left:138.60px;-webkit-text-stroke:0.15px #333;width:17.60px;text-align:justify;text-align-last:justify;">海苔</div>
<div class="t" style="top:190.66px;font-size:9px;line-height:12.6px;color:#333;left:281.00px;-webkit-text-stroke:0.15px #333;width:8.60px;text-align:justify;text-align-last:justify;">件</div>
<div class="t" style="top:190.77px;font-size:10px;line-height:14.0px;color:#e04646;right:871.70px;">-10.00</div>
<div class="t" style="top:190.77px;font-size:10px;line-height:14.0px;color:#333;right:804.70px;">5.00</div>
<div class="t" style="top:190.77px;font-size:10px;line-height:14.0px;color:#333;right:738.40px;">5.65</div>
<div class="t" style="top:190.77px;font-size:10px;line-height:14.0px;color:#e04646;right:671.70px;">-6.50</div>
<div class="t" style="top:190.77px;font-size:10px;line-height:14.0px;color:#e04646;right:605.40px;">-56.50</div>
<div class="t" style="top:190.77px;font-size:10px;line-height:14.0px;color:#333;right:538.40px;">13.00%</div>
<div class="t" style="top:190.77px;font-size:10px;line-height:14.0px;color:#e04646;right:404.70px;">-50.00</div>
<div style="left:96.00px;top:435.00px;width:1156.40px;height:17.40px;background:#fdeed8;"></div>
<div style="left:96.00px;top:435.00px;width:1.00px;height:17.00px;background:#eee0c8;"></div>
<div style="left:129.00px;top:435.00px;width:1.00px;height:17.00px;background:#eee0c8;"></div>
<div style="left:205.00px;top:435.00px;width:1.00px;height:17.00px;background:#eee0c8;"></div>
<div style="left:272.00px;top:435.00px;width:1.00px;height:17.00px;background:#eee0c8;"></div>
<div style="left:338.00px;top:435.00px;width:1.00px;height:17.00px;background:#eee0c8;"></div>
<div style="left:405.00px;top:435.00px;width:1.00px;height:17.00px;background:#eee0c8;"></div>
<div style="left:472.00px;top:435.00px;width:1.00px;height:17.00px;background:#eee0c8;"></div>
<div style="left:539.00px;top:435.00px;width:1.00px;height:17.00px;background:#eee0c8;"></div>
<div style="left:605.00px;top:435.00px;width:1.00px;height:17.00px;background:#eee0c8;"></div>
<div style="left:672.00px;top:435.00px;width:1.00px;height:17.00px;background:#eee0c8;"></div>
<div style="left:738.00px;top:435.00px;width:1.00px;height:17.00px;background:#eee0c8;"></div>
<div style="left:805.00px;top:435.00px;width:1.00px;height:17.00px;background:#eee0c8;"></div>
<div style="left:872.00px;top:435.00px;width:1.00px;height:17.00px;background:#eee0c8;"></div>
<div style="left:1184.00px;top:435.00px;width:1.00px;height:17.00px;background:#eee0c8;"></div>
<div style="left:1252.00px;top:435.00px;width:1.00px;height:17.00px;background:#eee0c8;"></div>
<div style="left:96.00px;top:451.80px;width:1156.40px;height:1.00px;background:#ede4d6;"></div>
<div style="left:1184.40px;top:435.30px;width:1.80px;height:17.50px;background:#fff;"></div>
<div style="left:1183.90px;top:435.30px;width:0.80px;height:17.50px;background:#e6dccb;"></div>
<div class="t" style="top:439.40px;font-size:9px;line-height:12.6px;color:#333;left:96.00px;-webkit-text-stroke:0.15px #333;width:33.2px;text-align:center;">小计</div>
<div class="t" style="top:438.92px;font-size:10.4px;line-height:14.56px;color:#d9262b;right:671.70px;font-weight:bold;">-6.50</div>
<div class="t" style="top:438.92px;font-size:10.4px;line-height:14.56px;color:#d9262b;right:605.20px;font-weight:bold;">-56.50</div>
<div class="t" style="top:438.92px;font-size:10.4px;line-height:14.56px;color:#d9262b;right:404.70px;font-weight:bold;">-50.00</div>
<div style="left:1249.00px;top:197.50px;width:1.60px;height:206.50px;background:#666;border-radius:1px"></div>
<div style="left:1255.70px;top:132.00px;width:14.00px;height:124.60px;background:#fff;box-shadow:-1px 0 3px rgba(0,0,0,0.13);z-index:6"></div>
<div style="left:1258.00px;top:156.50px;width:11.30px;height:1.00px;background:#e8e8e8;z-index:7"></div>
<div style="left:1258.00px;top:181.00px;width:11.30px;height:1.00px;background:#e8e8e8;z-index:7"></div>
<div style="left:1258.00px;top:205.00px;width:11.30px;height:1.00px;background:#e8e8e8;z-index:7"></div>
<div style="left:1258.00px;top:229.50px;width:11.30px;height:1.00px;background:#e8e8e8;z-index:7"></div>
<div style="left:1255.70px;top:233.60px;width:13.30px;height:23.00px;background:#1aa8d2;z-index:7"></div>
<svg style="left:1261.5px;top:140px;z-index:8" width="8" height="11" viewBox="0 0 8 11"><rect x="0.6" y="0.6" width="9" height="9.8" rx="1.5" fill="none" stroke="#555" stroke-width="1.1"/><path d="M3 3h4M3 5.5h4" stroke="#555" stroke-width="1"/></svg>
<svg style="left:1261.5px;top:164.5px;z-index:8" width="8" height="11" viewBox="0 0 8 11"><rect x="0.6" y="0.6" width="9" height="9.8" rx="1.5" fill="none" stroke="#555" stroke-width="1.1"/><path d="M2.5 3h5M2.5 5.5h5M2.5 8h3" stroke="#555" stroke-width="1"/></svg>
<svg style="left:1261.5px;top:188px;z-index:8" width="8" height="11" viewBox="0 0 8 11"><circle cx="5.5" cy="5.5" r="4.8" fill="none" stroke="#555" stroke-width="1.1"/><path d="M3 3.5h4l-3 4" fill="none" stroke="#555" stroke-width="1"/></svg>
<svg style="left:1261px;top:211.5px;z-index:8" width="8" height="12" viewBox="0 0 8 12"><path d="M7.5 3L2.2 8.6a1.5 1.5 0 0 0 2.1 2L9 5.6a2.8 2.8 0 0 0-4-3.8L0.6 6.3" fill="none" stroke="#555" stroke-width="1.1"/></svg>
<svg style="left:1261.5px;top:240px;z-index:8" width="8" height="12" viewBox="0 0 8 12"><path d="M8 0.6H0.6V11.4H8" fill="none" stroke="#fff" stroke-width="1.1"/><path d="M6 4.5L2.5 8M2.5 5.5V8H5" fill="none" stroke="#fff" stroke-width="1"/></svg>
<div style="left:924.00px;top:86.00px;width:152.00px;height:38.30px;background:#1aa9d4;border-radius:3px;z-index:10"></div>
<div style="left:933.60px;top:95.50px;width:2.00px;height:7.40px;background:#fff;z-index:11"></div>
<div class="t" style="top:93.10px;font-size:9px;line-height:12.6px;color:#fff;letter-spacing:0.33px;left:939.40px;-webkit-text-stroke:0.15px #fff;z-index:11;width:120.89px;text-align:justify;text-align-last:justify;">这里可以选择收入确认单生成</div>
<svg style="left:1064.60px;top:96.40px;z-index:11;" width="6" height="6" viewBox="0 0 6 6"><path d="M0.5 0.5L5.5 5.5M5.5 0.5L0.5 5.5" stroke="#fff" stroke-width="1.4"/></svg>
<div class="t" style="top:105.70px;font-size:9px;line-height:12.6px;color:#fff;letter-spacing:0.33px;left:939.40px;-webkit-text-stroke:0.15px #fff;z-index:11;width:64.91px;text-align:justify;text-align-last:justify;">红字收入确认单</div>
<div style="left:1014.30px;top:59.00px;width:77.70px;height:24.00px;background:#fff;border-radius:2px;box-shadow:0 1px 5px rgba(0,0,0,0.22);z-index:10"></div>
<div class="t" style="top:65.70px;font-size:8px;line-height:11.2px;color:#333;left:1030.00px;-webkit-text-stroke:0.15px #333;z-index:11;width:47.60px;text-align:justify;text-align-last:justify;">选收入确认单</div>
<div style="left:82.00px;top:522.30px;width:1187.00px;height:32.00px;background:#fff;box-shadow:0 -1px 1px rgba(0,0,0,0.05)"></div>
<div class="t" style="top:536.68px;font-size:7.6px;line-height:10.64px;color:#333;left:840.50px;-webkit-text-stroke:0.15px #333;width:45.94px;text-align:justify;text-align-last:justify;">打印次数:0次</div>
<div style="left:900.20px;top:537.00px;width:9.40px;height:9.20px;background:#fff;border:1px solid #b0b0b0;border-radius:50%"></div>
<div style="left:902.80px;top:541.50px;width:4.20px;height:2.20px;background:#fff;border:0.8px solid #b0b0b0;border-top:none"></div>
<div class="t" style="top:535.70px;font-size:9px;line-height:12.6px;color:#222;letter-spacing:-0.1px;left:911.00px;-webkit-text-stroke:0.15px #222;width:37.60px;text-align:justify;text-align-last:justify;-webkit-text-stroke:0.2px #222;">商品种类:</div>
<div class="t" style="top:535.70px;font-size:9px;line-height:12.6px;color:#f0883a;left:955.50px;">1</div>
<div class="t" style="top:536.05px;font-size:8.5px;line-height:11.9px;color:#333;left:964.00px;-webkit-text-stroke:0.15px #333;width:8.60px;text-align:justify;text-align-last:justify;">种</div>
<div style="left:1010.00px;top:528.30px;width:55.00px;height:24.10px;background:#fff;border:1px solid #d2d2d2;border-radius:2px"></div>
<div class="t" style="top:532.80px;font-size:11px;line-height:15.4px;color:#333;left:1026.70px;-webkit-text-stroke:0.15px #333;width:21.60px;text-align:justify;text-align-last:justify;">放弃</div>
<div style="left:1073.00px;top:528.30px;width:76.00px;height:24.10px;background:#fff;border:1px solid #6b78e4;border-radius:2px"></div>
<div class="t" style="top:533.50px;font-size:10px;line-height:14.0px;color:#5563dc;letter-spacing:0.5px;left:1089.80px;-webkit-text-stroke:0.15px #5563dc;width:41.60px;text-align:justify;text-align-last:justify;">保存草稿</div>
<div style="left:1157.00px;top:531.00px;width:95.00px;height:26.00px;background:#4f5ff2;border-radius:2px"></div>
<div class="t" style="top:535.80px;font-size:11px;line-height:15.4px;color:#fff;letter-spacing:-0.3px;left:1188.60px;-webkit-text-stroke:0.15px #fff;width:21.00px;text-align:justify;text-align-last:justify;">保存</div>
<svg style="left:1213px;top:541px" width="8" height="5" viewBox="0 0 8 5"><path d="M0.6 4.4L4 1L7.4 4.4" fill="none" stroke="#fff" stroke-width="1.1"/></svg>
<div style="left:0;top:0;width:76px;height:554px;background:#1c2a55;z-index:5">
<div style="left:4.00px;top:66.60px;width:67.50px;height:21.20px;background:radial-gradient(circle at 0% 120%, rgba(120,160,255,0.35) 0 60px, rgba(255,255,255,0) 62px), linear-gradient(90deg,#5d84f6 0%,#5a7cf5 50%,#4f62f0 100%);border-radius:1.5px"></div>
<div class="t" style="top:13.00px;font-size:9px;line-height:12.6px;color:#eceef5;letter-spacing:0.4px;left:14.50px;-webkit-text-stroke:0.15px #eceef5;width:37.20px;text-align:justify;text-align-last:justify;">搜索菜单</div>
<div class="t" style="top:42.43px;font-size:9px;line-height:12.6px;color:#eceef5;letter-spacing:0.4px;left:14.50px;-webkit-text-stroke:0.15px #eceef5;width:37.20px;text-align:justify;text-align-last:justify;">快捷导航</div>
<div class="t" style="top:71.86px;font-size:9px;line-height:12.6px;color:#eceef5;letter-spacing:0.4px;left:14.50px;-webkit-text-stroke:0.15px #eceef5;width:37.20px;text-align:justify;text-align-last:justify;">项目合同</div>
<div class="t" style="top:101.29px;font-size:9px;line-height:12.6px;color:#eceef5;letter-spacing:0.4px;left:14.50px;-webkit-text-stroke:0.15px #eceef5;width:37.20px;text-align:justify;text-align-last:justify;">零售管理</div>
<div style="left:60.6px;top:105.09px;width:0;height:0;border-left:3.3px solid transparent;border-right:3.3px solid transparent;border-top:5px solid #fff"></div>
<div class="t" style="top:130.72px;font-size:9px;line-height:12.6px;color:#eceef5;letter-spacing:0.4px;left:14.50px;-webkit-text-stroke:0.15px #eceef5;width:37.20px;text-align:justify;text-align-last:justify;">批发管理</div>
<div style="left:60.6px;top:134.52px;width:0;height:0;border-left:3.3px solid transparent;border-right:3.3px solid transparent;border-top:5px solid #fff"></div>
<div class="t" style="top:160.15px;font-size:9px;line-height:12.6px;color:#eceef5;letter-spacing:0.4px;left:14.50px;-webkit-text-stroke:0.15px #eceef5;width:37.20px;text-align:justify;text-align-last:justify;">小畅电商</div>
<div class="t" style="top:189.58px;font-size:9px;line-height:12.6px;color:#eceef5;letter-spacing:0.4px;left:14.50px;-webkit-text-stroke:0.15px #eceef5;width:37.20px;text-align:justify;text-align-last:justify;">采购管理</div>
<div class="t" style="top:219.01px;font-size:9px;line-height:12.6px;color:#eceef5;letter-spacing:0.4px;left:14.50px;-webkit-text-stroke:0.15px #eceef5;width:37.20px;text-align:justify;text-align-last:justify;">库存核算</div>
<div class="t" style="top:248.44px;font-size:9px;line-height:12.6px;color:#eceef5;letter-spacing:0.4px;left:14.50px;-webkit-text-stroke:0.15px #eceef5;width:37.20px;text-align:justify;text-align-last:justify;">资金管理</div>
<div class="t" style="top:277.87px;font-size:9px;line-height:12.6px;color:#eceef5;letter-spacing:0.4px;left:14.50px;-webkit-text-stroke:0.15px #eceef5;width:37.20px;text-align:justify;text-align-last:justify;">总账管理</div>
<div class="t" style="top:307.30px;font-size:9px;line-height:12.6px;color:#eceef5;letter-spacing:0.4px;left:14.50px;-webkit-text-stroke:0.15px #eceef5;width:37.20px;text-align:justify;text-align-last:justify;">发票管理</div>
<div class="t" style="top:336.73px;font-size:9px;line-height:12.6px;color:#eceef5;letter-spacing:0.4px;left:14.50px;-webkit-text-stroke:0.15px #eceef5;width:37.20px;text-align:justify;text-align-last:justify;">税务管理</div>
<div class="t" style="top:366.16px;font-size:9px;line-height:12.6px;color:#eceef5;letter-spacing:0.4px;left:14.50px;-webkit-text-stroke:0.15px #eceef5;width:37.20px;text-align:justify;text-align-last:justify;">固定资产</div>
<div class="t" style="top:395.59px;font-size:9px;line-height:12.6px;color:#eceef5;letter-spacing:0.4px;left:14.50px;-webkit-text-stroke:0.15px #eceef5;width:18.40px;text-align:justify;text-align-last:justify;">工资</div>
<div class="t" style="top:425.02px;font-size:9px;line-height:12.6px;color:#eceef5;letter-spacing:0.4px;left:14.50px;-webkit-text-stroke:0.15px #eceef5;width:37.20px;text-align:justify;text-align-last:justify;">智能管理</div>
<div class="t" style="top:454.45px;font-size:9px;line-height:12.6px;color:#eceef5;letter-spacing:0.4px;left:14.50px;-webkit-text-stroke:0.15px #eceef5;width:37.20px;text-align:justify;text-align-last:justify;">经营管理</div>
<div class="t" style="top:483.88px;font-size:9px;line-height:12.6px;color:#eceef5;letter-spacing:0.4px;left:14.50px;-webkit-text-stroke:0.15px #eceef5;width:37.20px;text-align:justify;text-align-last:justify;">小畅报销</div>
<div class="t" style="top:513.31px;font-size:9px;line-height:12.6px;color:#eceef5;letter-spacing:0.4px;left:14.50px;-webkit-text-stroke:0.15px #eceef5;width:37.20px;text-align:justify;text-align-last:justify;">基础信息</div>
<div style="left:7.20px;top:427.80px;width:4.40px;height:4.40px;background:#f01818;border-radius:50%"></div>
<div style="left:11.00px;top:0.00px;width:16.00px;height:1.00px;background:rgba(220,225,240,0.6);"></div>
<div style="left:0.00px;top:532.20px;width:76.00px;height:21.80px;background:#152559;"></div>
<svg style="left:33px;top:539.6px" width="10" height="10" viewBox="0 0 10 10"><path d="M5 0.2L6.3 1.6L8.2 1.3L8.6 3.2L10 4.5L8.9 6L9 8L7.1 8.3L5.9 9.9L5 9.8L3.4 8.6L1.5 8.7L1.2 6.8L0 5.5L1 3.9L1.1 1.9L3 1.6Z" fill="#fff"/><circle cx="5" cy="5" r="1.6" fill="#152559"/></svg>
</div>
<div style="left:83px;top:0;width:1186px;height:554px;overflow:hidden;z-index:3;pointer-events:none">
<div class="wm" style="left:-52.0px;top:-91.8px"><s>电话</s><i>:</i><b>400-665-0028</b></div>
<div class="wm" style="left:-52.0px;top:-61.8px"><s>网址</s><i>:</i><u>www.chanjet.net</u></div>
<div class="wm" style="left:218.7px;top:-91.8px"><s>电话</s><i>:</i><b>400-665-0028</b></div>
<div class="wm" style="left:218.7px;top:-61.8px"><s>网址</s><i>:</i><u>www.chanjet.net</u></div>
<div class="wm" style="left:489.4px;top:-91.8px"><s>电话</s><i>:</i><b>400-665-0028</b></div>
<div class="wm" style="left:489.4px;top:-61.8px"><s>网址</s><i>:</i><u>www.chanjet.net</u></div>
<div class="wm" style="left:760.1px;top:-91.8px"><s>电话</s><i>:</i><b>400-665-0028</b></div>
<div class="wm" style="left:760.1px;top:-61.8px"><s>网址</s><i>:</i><u>www.chanjet.net</u></div>
<div class="wm" style="left:1030.8px;top:-91.8px"><s>电话</s><i>:</i><b>400-665-0028</b></div>
<div class="wm" style="left:1030.8px;top:-61.8px"><s>网址</s><i>:</i><u>www.chanjet.net</u></div>
<div class="wm" style="left:1301.5px;top:-91.8px"><s>电话</s><i>:</i><b>400-665-0028</b></div>
<div class="wm" style="left:1301.5px;top:-61.8px"><s>网址</s><i>:</i><u>www.chanjet.net</u></div>
<div class="wm" style="left:-52.0px;top:18.2px"><s>电话</s><i>:</i><b>400-665-0028</b></div>
<div class="wm" style="left:-52.0px;top:48.2px"><s>网址</s><i>:</i><u>www.chanjet.net</u></div>
<div class="wm" style="left:218.7px;top:18.2px"><s>电话</s><i>:</i><b>400-665-0028</b></div>
<div class="wm" style="left:218.7px;top:48.2px"><s>网址</s><i>:</i><u>www.chanjet.net</u></div>
<div class="wm" style="left:489.4px;top:18.2px"><s>电话</s><i>:</i><b>400-665-0028</b></div>
<div class="wm" style="left:489.4px;top:48.2px"><s>网址</s><i>:</i><u>www.chanjet.net</u></div>
<div class="wm" style="left:760.1px;top:18.2px"><s>电话</s><i>:</i><b>400-665-0028</b></div>
<div class="wm" style="left:760.1px;top:48.2px"><s>网址</s><i>:</i><u>www.chanjet.net</u></div>
<div class="wm" style="left:1030.8px;top:18.2px"><s>电话</s><i>:</i><b>400-665-0028</b></div>
<div class="wm" style="left:1030.8px;top:48.2px"><s>网址</s><i>:</i><u>www.chanjet.net</u></div>
<div class="wm" style="left:1301.5px;top:18.2px"><s>电话</s><i>:</i><b>400-665-0028</b></div>
<div class="wm" style="left:1301.5px;top:48.2px"><s>网址</s><i>:</i><u>www.chanjet.net</u></div>
<div class="wm" style="left:-52.0px;top:128.2px"><s>电话</s><i>:</i><b>400-665-0028</b></div>
<div class="wm" style="left:-52.0px;top:158.2px"><s>网址</s><i>:</i><u>www.chanjet.net</u></div>
<div class="wm" style="left:218.7px;top:128.2px"><s>电话</s><i>:</i><b>400-665-0028</b></div>
<div class="wm" style="left:218.7px;top:158.2px"><s>网址</s><i>:</i><u>www.chanjet.net</u></div>
<div class="wm" style="left:489.4px;top:128.2px"><s>电话</s><i>:</i><b>400-665-0028</b></div>
<div class="wm" style="left:489.4px;top:158.2px"><s>网址</s><i>:</i><u>www.chanjet.net</u></div>
<div class="wm" style="left:760.1px;top:128.2px"><s>电话</s><i>:</i><b>400-665-0028</b></div>
<div class="wm" style="left:760.1px;top:158.2px"><s>网址</s><i>:</i><u>www.chanjet.net</u></div>
<div class="wm" style="left:1030.8px;top:128.2px"><s>电话</s><i>:</i><b>400-665-0028</b></div>
<div class="wm" style="left:1030.8px;top:158.2px"><s>网址</s><i>:</i><u>www.chanjet.net</u></div>
<div class="wm" style="left:1301.5px;top:128.2px"><s>电话</s><i>:</i><b>400-665-0028</b></div>
<div class="wm" style="left:1301.5px;top:158.2px"><s>网址</s><i>:</i><u>www.chanjet.net</u></div>
<div class="wm" style="left:-52.0px;top:238.2px"><s>电话</s><i>:</i><b>400-665-0028</b></div>
<div class="wm" style="left:-52.0px;top:268.2px"><s>网址</s><i>:</i><u>www.chanjet.net</u></div>
<div class="wm" style="left:218.7px;top:238.2px"><s>电话</s><i>:</i><b>400-665-0028</b></div>
<div class="wm" style="left:218.7px;top:268.2px"><s>网址</s><i>:</i><u>www.chanjet.net</u></div>
<div class="wm" style="left:489.4px;top:238.2px"><s>电话</s><i>:</i><b>400-665-0028</b></div>
<div class="wm" style="left:489.4px;top:268.2px"><s>网址</s><i>:</i><u>www.chanjet.net</u></div>
<div class="wm" style="left:760.1px;top:238.2px"><s>电话</s><i>:</i><b>400-665-0028</b></div>
<div class="wm" style="left:760.1px;top:268.2px"><s>网址</s><i>:</i><u>www.chanjet.net</u></div>
<div class="wm" style="left:1030.8px;top:238.2px"><s>电话</s><i>:</i><b>400-665-0028</b></div>
<div class="wm" style="left:1030.8px;top:268.2px"><s>网址</s><i>:</i><u>www.chanjet.net</u></div>
<div class="wm" style="left:1301.5px;top:238.2px"><s>电话</s><i>:</i><b>400-665-0028</b></div>
<div class="wm" style="left:1301.5px;top:268.2px"><s>网址</s><i>:</i><u>www.chanjet.net</u></div>
<div class="wm" style="left:-52.0px;top:348.2px"><s>电话</s><i>:</i><b>400-665-0028</b></div>
<div class="wm" style="left:-52.0px;top:378.2px"><s>网址</s><i>:</i><u>www.chanjet.net</u></div>
<div class="wm" style="left:218.7px;top:348.2px"><s>电话</s><i>:</i><b>400-665-0028</b></div>
<div class="wm" style="left:218.7px;top:378.2px"><s>网址</s><i>:</i><u>www.chanjet.net</u></div>
<div class="wm" style="left:489.4px;top:348.2px"><s>电话</s><i>:</i><b>400-665-0028</b></div>
<div class="wm" style="left:489.4px;top:378.2px"><s>网址</s><i>:</i><u>www.chanjet.net</u></div>
<div class="wm" style="left:760.1px;top:348.2px"><s>电话</s><i>:</i><b>400-665-0028</b></div>
<div class="wm" style="left:760.1px;top:378.2px"><s>网址</s><i>:</i><u>www.chanjet.net</u></div>
<div class="wm" style="left:1030.8px;top:348.2px"><s>电话</s><i>:</i><b>400-665-0028</b></div>
<div class="wm" style="left:1030.8px;top:378.2px"><s>网址</s><i>:</i><u>www.chanjet.net</u></div>
<div class="wm" style="left:1301.5px;top:348.2px"><s>电话</s><i>:</i><b>400-665-0028</b></div>
<div class="wm" style="left:1301.5px;top:378.2px"><s>网址</s><i>:</i><u>www.chanjet.net</u></div>
<div class="wm" style="left:-52.0px;top:458.2px"><s>电话</s><i>:</i><b>400-665-0028</b></div>
<div class="wm" style="left:-52.0px;top:488.2px"><s>网址</s><i>:</i><u>www.chanjet.net</u></div>
<div class="wm" style="left:218.7px;top:458.2px"><s>电话</s><i>:</i><b>400-665-0028</b></div>
<div class="wm" style="left:218.7px;top:488.2px"><s>网址</s><i>:</i><u>www.chanjet.net</u></div>
<div class="wm" style="left:489.4px;top:458.2px"><s>电话</s><i>:</i><b>400-665-0028</b></div>
<div class="wm" style="left:489.4px;top:488.2px"><s>网址</s><i>:</i><u>www.chanjet.net</u></div>
<div class="wm" style="left:760.1px;top:458.2px"><s>电话</s><i>:</i><b>400-665-0028</b></div>
<div class="wm" style="left:760.1px;top:488.2px"><s>网址</s><i>:</i><u>www.chanjet.net</u></div>
<div class="wm" style="left:1030.8px;top:458.2px"><s>电话</s><i>:</i><b>400-665-0028</b></div>
<div class="wm" style="left:1030.8px;top:488.2px"><s>网址</s><i>:</i><u>www.chanjet.net</u></div>
<div class="wm" style="left:1301.5px;top:458.2px"><s>电话</s><i>:</i><b>400-665-0028</b></div>
<div class="wm" style="left:1301.5px;top:488.2px"><s>网址</s><i>:</i><u>www.chanjet.net</u></div>
</div>
</body></html>
